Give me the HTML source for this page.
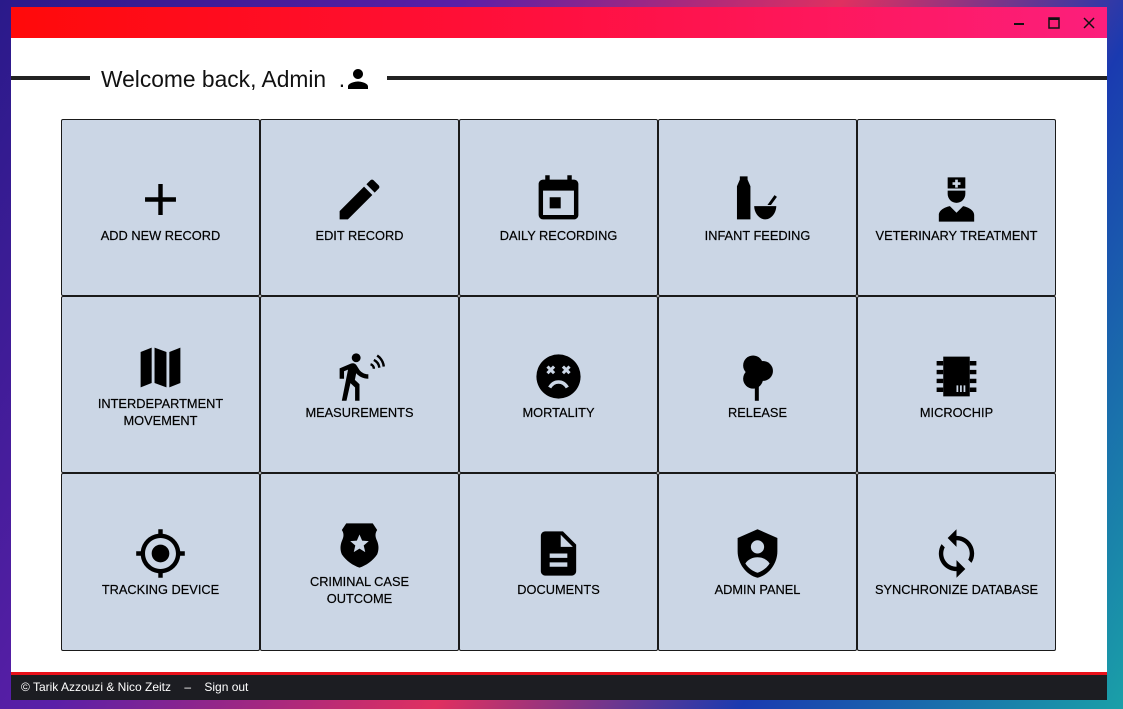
<!DOCTYPE html>
<html><head><meta charset="utf-8"><style>
*{margin:0;padding:0;box-sizing:border-box}
html,body{width:1123px;height:709px;overflow:hidden}
body{background:linear-gradient(120deg,#2a1a8a 0%,#5a1fa8 30%,#e03060 55%,#1a3ab0 75%,#1aa0a8 100%);font-family:"Liberation Sans",sans-serif;position:relative}
.win{position:absolute;left:11px;top:7px;width:1096px;height:693px;background:#fff}
.tb{height:31px;background:linear-gradient(90deg,#ff0a0a 0%,#ff1040 50%,#fc1f7c 100%);position:relative}
.tb span{position:absolute;top:0;height:31px;display:flex;align-items:center;justify-content:center;width:30px}
.hdr{position:absolute;top:69px;left:0;width:1096px;height:4px}
.l1{position:absolute;left:0;top:0;width:79px;height:4px;background:#222}
.l2{position:absolute;left:376px;top:0;width:720px;height:4px;background:#222}
.ht{position:absolute;left:90px;top:57px;font-size:22.8px;color:#111;white-space:nowrap;display:flex;align-items:center}
.grid{position:absolute;left:50px;top:112px;display:grid;grid-template-columns:repeat(5,199px);grid-template-rows:177px 177px 178px}
.t{background:#cbd6e5;border:1px solid #1a1a1a;border-radius:2px;display:flex;flex-direction:column;align-items:center;justify-content:center;text-align:center;font-size:12.8px;color:#000;line-height:17px;padding-top:1px;-webkit-text-stroke:0.2px #000}
.t svg{width:53px;height:53px;margin-bottom:1px}
.redl{position:absolute;left:0;top:665px;width:1096px;height:3px;background:#e8101a}
.ft{position:absolute;left:0;top:668px;width:1096px;height:25px;background:#1c1d22;color:#fff;font-size:12px;line-height:25px;padding-left:10px}
</style></head><body>
<div class="win">
 <div class="tb">
  <span style="left:993px"><svg width="12" height="12"><rect x="1" y="6" width="10" height="2" fill="#111"/></svg></span>
  <span style="left:1028px"><svg width="12" height="12"><rect x="1" y="1" width="10" height="10" fill="none" stroke="#111" stroke-width="1.5"/><rect x="1" y="1" width="10" height="2" fill="#111"/></svg></span>
  <span style="left:1063px"><svg width="12" height="12"><path d="M1 1L11 11M11 1L1 11" stroke="#111" stroke-width="1.5"/></svg></span>
 </div>
 <div class="hdr"><div class="l1"></div><div class="l2"></div></div>
 <div class="ht">Welcome back, Admin &nbsp;.<svg width="30" height="30" viewBox="0 0 24 24" style="margin-left:-2px"><path d="M12 12c2.21 0 4-1.79 4-4s-1.79-4-4-4-4 1.79-4 4 1.79 4 4 4zm0 2c-2.67 0-8 1.34-8 4v2h16v-2c0-2.66-5.33-4-8-4z"/></svg></div>
 <div class="grid">
  <div class="t"><svg viewBox="0 0 24 24"><path d="M19 13h-6v6h-2v-6H5v-2h6V5h2v6h6v2z"/></svg>ADD NEW RECORD</div>
  <div class="t"><svg viewBox="0 0 24 24"><path d="M3 17.25V21h3.75L17.81 9.94l-3.75-3.75L3 17.25zM20.71 7.04a1 1 0 000-1.41l-2.34-2.34a1 1 0 00-1.41 0l-1.83 1.830 3.75 3.75 1.83-1.83z"/></svg>EDIT RECORD</div>
  <div class="t"><svg viewBox="0 0 24 24"><path d="M13 11H8v5h5v-5zM16 1v2H8V1H6v2H5c-1.11 0-2 .9-2 2v14a2 2 0 002 2h14c1.1 0 2-.9 2-2V5c0-1.1-.9-2-2-2h-1V1h-2zm3 18H5V8h14v11z"/></svg>DAILY RECORDING</div>
  <div class="t"><svg viewBox="0 0 24 24"><path d="M4 1.5h3.5v1.5L8.8 6v15H2.7V6L4 3z"/><path d="M10.5 15h10c0 3-2.2 6-5 6s-5-3-5-6zM16.5 14.5l3.2-4.5 1.1.8-2.7 3.7z"/></svg>INFANT FEEDING</div>
  <div class="t"><svg viewBox="0 0 24 24"><path d="M8 2h8v5H8z"/><path d="M11.4 3h1.2v1.2h1.2v1.2h-1.2v1.2h-1.2V5.4h-1.2V4.2h1.2z" fill="#cbd6e5"/><path d="M8 8h8v1.5c0 2.2-1.8 4-4 4s-4-1.8-4-4zM4 22v-3c0-2 2.5-3.5 5-4l3 3 3-3c2.5.5 5 2 5 4v3z"/></svg>VETERINARY TREATMENT</div>

  <div class="t"><svg viewBox="0 0 24 24"><path d="M3 5l5-2v16l-5 2zM9.3 3l5.4 2v16l-5.4-2zM16 5l5-2v16l-5 2z"/></svg>INTERDEPARTMENT<br>MOVEMENT</div>
  <div class="t"><svg viewBox="0 0 24 24"><path d="M10.5 5.5c1.1 0 2-.9 2-2s-.9-2-2-2-2 .9-2 2 .9 2 2 2zM6.8 8.9L4 23h2.1l1.8-8 2.1 2v6h2v-7.5l-2.1-2 .6-3C11.8 12 13.8 13 16 13v-2c-1.9 0-3.5-1-4.3-2.4l-1-1.6c-.4-.6-1-1-1.7-1-.3 0-.5.1-.8.1L3 8.3V13h2V9.6l1.8-.7"/><path d="M17 6.5a2 2 0 011.5 2M18.5 4.5a4.5 4.5 0 012.5 3.5M20 2.5a7 7 0 013 5" stroke="#000" stroke-width="1.1" fill="none"/></svg>MEASUREMENTS</div>
  <div class="t"><svg viewBox="0 0 24 24"><circle cx="12" cy="12" r="10"/><path d="M7 7.5l3 3M10 7.5l-3 3M14 7.5l3 3M17 7.5l-3 3" stroke="#cbd6e5" stroke-width="1.4"/><path d="M8 17c1-1.7 2.4-2.5 4-2.5s3 .8 4 2.5" stroke="#cbd6e5" stroke-width="1.6" fill="none"/></svg>MORTALITY</div>
  <div class="t"><svg viewBox="0 0 24 24"><circle cx="10" cy="7" r="4.5"/><circle cx="14.5" cy="9.5" r="4.5"/><circle cx="10" cy="13" r="4.5"/><rect x="10.8" y="14" width="1.8" height="9"/></svg>RELEASE</div>
  <div class="t"><svg viewBox="0 0 24 24"><rect x="6" y="3" width="12" height="18"/><path d="M3 5h3v2H3zM3 9h3v2H3zM3 13h3v2H3zM3 17h3v2H3zM18 5h3v2h-3zM18 9h3v2h-3zM18 13h3v2h-3zM18 17h3v2h-3z"/><path d="M12 16h.8v3H12zM13.6 16h.8v3h-.8zM15.2 16h.8v3h-.8z" fill="#cbd6e5"/></svg>MICROCHIP</div>

  <div class="t"><svg viewBox="0 0 24 24"><path d="M12 8c-2.21 0-4 1.79-4 4s1.79 4 4 4 4-1.79 4-4-1.79-4-4-4zm8.94 3A8.994 8.994 0 0013 3.06V1h-2v2.06A8.994 8.994 0 003.06 11H1v2h2.06A8.994 8.994 0 0011 20.94V23h2v-2.06A8.994 8.994 0 0020.94 13H23v-2h-2.06zM12 19c-3.870 0-7-3.13-7-7s3.13-7 7-7 7 3.13 7 7-3.13 7-7 7z"/></svg>TRACKING DEVICE</div>
  <div class="t"><svg viewBox="0 0 24 24"><path d="M6 2h12l2 3c-1 1.5-1 3 0 5 .8 2 .8 4 0 6-2 3-5 5-8 6-3-1-6-3-8-6-.8-2-.8-4 0-6 1-2 1-3.5 0-5z"/><path d="M12 7l1.2 2.8 3 .2-2.3 2 .7 3-2.6-1.6-2.6 1.6.7-3-2.3-2 3-.2z" fill="#cbd6e5"/></svg>CRIMINAL CASE<br>OUTCOME</div>
  <div class="t"><svg viewBox="0 0 24 24"><path d="M14 2H6c-1.1 0-1.99.9-1.99 2L4 20c0 1.1.89 2 1.99 2H18c1.1 0 2-.9 2-2V8l-6-6zm2 16H8v-2h8v2zm0-4H8v-2h8v2zm-3-5V3.5L18.5 9H13z"/></svg>DOCUMENTS</div>
  <div class="t"><svg viewBox="0 0 24 24"><path d="M12 1L3 5v6c0 5.55 3.84 10.74 9 12 5.16-1.26 9-6.45 9-12V5l-9-4z"/><circle cx="12" cy="9" r="3" fill="#cbd6e5"/><path d="M6.5 16.5c1.2-1.8 3.3-2.8 5.5-2.8s4.3 1 5.5 2.8c-1.3 2-3.3 3.5-5.5 4.2-2.2-.7-4.2-2.2-5.5-4.2z" fill="#cbd6e5"/></svg>ADMIN PANEL</div>
  <div class="t"><svg viewBox="0 0 24 24"><path d="M12 4V1L8 5l4 4V6c3.31 0 6 2.690 6 6 0 1.01-.25 1.97-.7 2.8l1.46 1.46A7.93 7.93 0 0020 12c0-4.42-3.58-8-8-8zm0 14c-3.31 0-6-2.69-6-6 0-1.01.25-1.97.7-2.8L5.24 7.74A7.93 7.93 0 004 12c0 4.42 3.58 8 8 8v3l4-4-4-4v3z"/></svg>SYNCHRONIZE DATABASE</div>
 </div>
 <div class="redl"></div>
 <div class="ft">© Tarik Azzouzi &amp; Nico Zeitz &nbsp;&nbsp; – &nbsp;&nbsp; Sign out</div>
</div>
</body></html>
